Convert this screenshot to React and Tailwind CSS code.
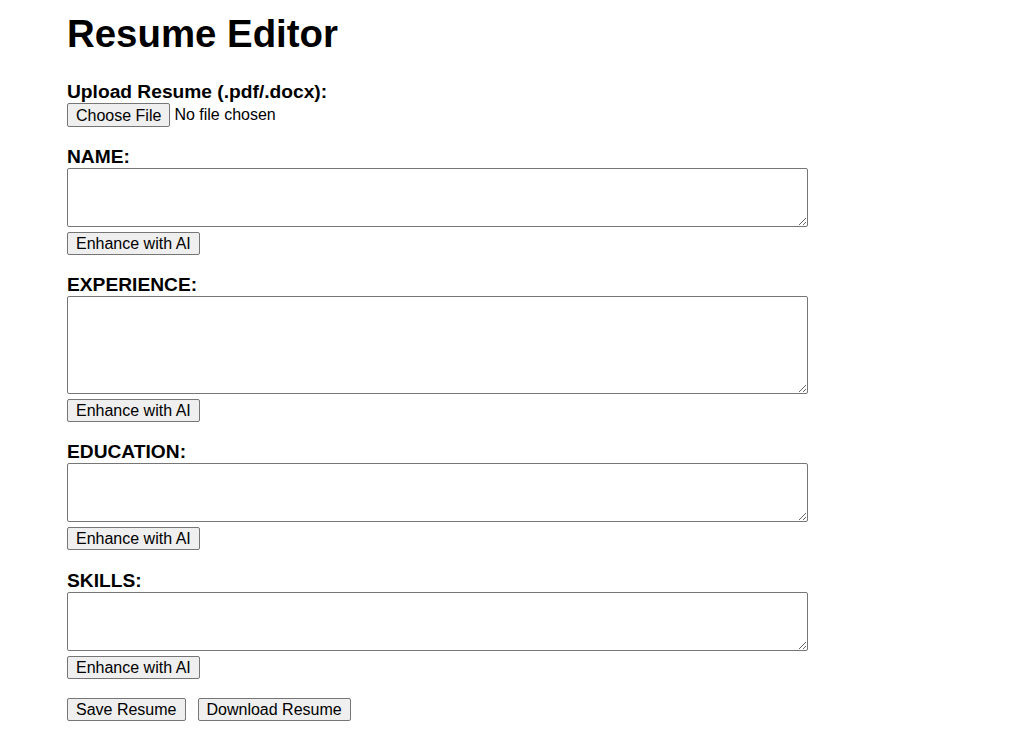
const sections = [
  { label: 'NAME:', height: 'h-[59px]', gap: 'mt-[19px]' },
  { label: 'EXPERIENCE:', height: 'h-[98px]', gap: 'mt-[19px]' },
  { label: 'EDUCATION:', height: 'h-[59px]', gap: 'mt-[19px]' },
  { label: 'SKILLS:', height: 'h-[59px]', gap: 'mt-[20px]' },
]

const Button = ({ children, tall }) => (
  <button
    className={`${tall ? 'h-[24px]' : 'h-[23px]'} px-[8px] border border-[#767676] rounded-[2px] bg-[#efefef] text-[16px] leading-[19px] text-black`}
  >
    {children}
  </button>
)

const Section = ({ label, height, gap }) => (
  <div className={`flex flex-col items-start ${gap}`}>
    <label className="text-[19.2px] leading-[21px] font-bold mb-[1px]">{label}</label>
    <textarea
      className={`w-[741px] ${height} border border-[#767676] rounded-[2px] bg-white`}
    />
    <div className="flex mt-[5px]">
      <Button>Enhance with AI</Button>
    </div>
  </div>
)

export default function App() {
  return (
    <div className="min-h-screen bg-white text-black font-['Liberation_Sans',Arial,sans-serif] pl-[67px] pt-[12px]">
      <h1 className="text-[38.4px] leading-[44px] font-bold">Resume Editor</h1>

      <div className="mt-[25px] flex flex-col items-start">
        <label className="text-[19.2px] leading-[22px] font-bold">
          Upload Resume (.pdf/.docx):
        </label>
        <div className="flex items-center gap-[4px]">
          <Button tall>Choose File</Button>
          <span className="text-[16px]">No file chosen</span>
        </div>
      </div>

      {sections.map((s) => (
        <Section key={s.label} label={s.label} height={s.height} gap={s.gap} />
      ))}

      <div className="flex gap-[12px] mt-[19px]">
        <Button>Save Resume</Button>
        <Button>Download Resume</Button>
      </div>
    </div>
  )
}
